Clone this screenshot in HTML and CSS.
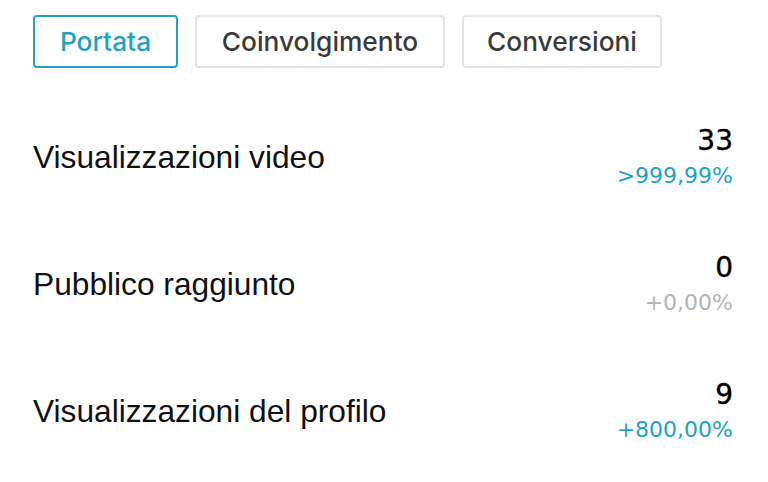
FILE: index.html
```html
<!DOCTYPE html>
<html lang="it">
<head>
<meta charset="utf-8">
<link rel="stylesheet" href="styles.css">
</head>
<body>
<div class="page">
  <div class="tabs">
    <div class="tab active">Portata</div>
    <div class="tab tab-wide">Coinvolgimento</div>
    <div class="tab tab-mid">Conversioni</div>
  </div>
  <div class="rows">
    <div class="row">
      <div class="label">Visualizzazioni video</div>
      <div class="vals">
        <div class="num">33</div>
        <div class="pct up">&gt;999,99%</div>
      </div>
    </div>
    <div class="row">
      <div class="label">Pubblico raggiunto</div>
      <div class="vals">
        <div class="num">0</div>
        <div class="pct flat">+0,00%</div>
      </div>
    </div>
    <div class="row">
      <div class="label">Visualizzazioni del profilo</div>
      <div class="vals">
        <div class="num">9</div>
        <div class="pct up">+800,00%</div>
      </div>
    </div>
  </div>
</div>
</body>
</html>
```
FILE: styles.css
```css
html, body {
  margin: 0;
  padding: 0;
  background: #ffffff;
}
.page {
  width: 768px;
  height: 482px;
  box-sizing: border-box;
  padding: 15px 35px 0 33px;
  font-family: "Liberation Sans", Arial, sans-serif;
  color: #111;
}
.tabs {
  display: flex;
  gap: 17px;
}
.tab {
  height: 53px;
  box-sizing: border-box;
  border: 2px solid #e3e3e3;
  border-radius: 4px;
  display: flex;
  align-items: center;
  justify-content: center;
  font-family: "Inter", "Liberation Sans", sans-serif;
  font-weight: 500;
  font-size: 26.3px;
  color: #3a3a3a;
  width: 145px;
}
.tab.active {
  border-color: #22a2c2;
  color: #22a2c2;
}
.tab-wide { width: 250px; }
.tab-mid { width: 200px; }
.rows {
  margin-top: 26px;
  display: flex;
  flex-direction: column;
}
.row {
  height: 127px;
  display: flex;
  align-items: center;
  justify-content: space-between;
}
.label {
  font-size: 31.7px;
  color: #111;
}
.vals {
  display: flex;
  flex-direction: column;
  align-items: flex-end;
}
.num {
  font-family: "DejaVu Sans", sans-serif;
  font-size: 28px;
  line-height: 32px;
  color: #000;
  -webkit-text-stroke: 0.4px #000;
}
.pct {
  font-family: "DejaVu Sans", sans-serif;
  font-size: 22px;
  line-height: 30px;
  margin-top: 4px;
}
.pct.up { color: #22a2c2; }
.pct.flat { color: #b3b3b3; }
```
